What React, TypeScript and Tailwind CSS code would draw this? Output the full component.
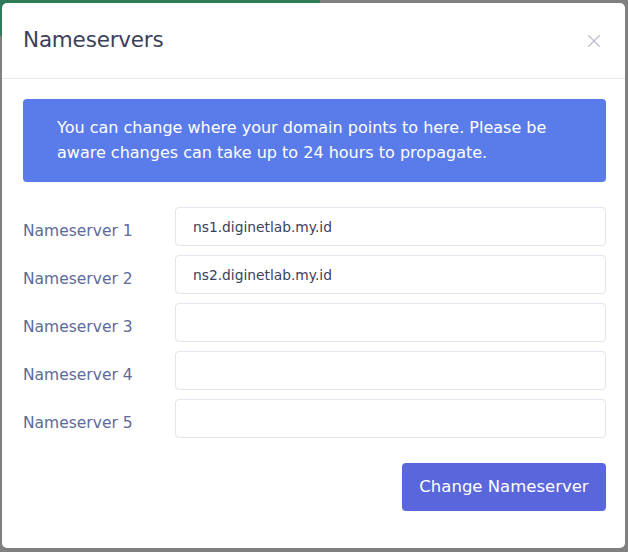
import { X } from 'lucide-react';

const servers = ['ns1.diginetlab.my.id', 'ns2.diginetlab.my.id', '', '', ''];

export default function App() {
  return (
    <div
      className="relative h-[552px] w-[628px] overflow-hidden bg-[#808080]"
      style={{ fontFamily: '"DejaVu Sans", "Open Sans", sans-serif' }}
    >
      <div className="absolute left-0 top-0 h-[36px] w-[320px] bg-[#2f7a57]" />
      <div className="absolute left-[2px] top-[3px] h-[545px] w-[623px] rounded-[5px] bg-white">
        <div className="flex h-[76px] items-center justify-between border-b border-[#e8e8ef] pl-[21px] pr-[20px]">
          <h2 className="text-[21.5px] tracking-[-0.2px] text-[#3b3f5c]">Nameservers</h2>
          <X className="h-[22px] w-[22px] text-[#b9bccb]" strokeWidth={1.2} />
        </div>

        <div className="pl-[21px] pr-[19px] pt-[20px]">
          <div className="rounded-[4px] bg-[#5a7cea] pb-[17px] pl-[34px] pr-[34px] pt-[16px] text-[16px] leading-[25px] text-white">
            You can change where your domain points to here. Please be aware changes can take up to 24 hours to propagate.
          </div>

          <div className="mt-[25px] flex flex-col gap-[9px]">
            {servers.map((value, i) => (
              <div key={i} className="flex items-start">
                <label className="w-[152px] pt-[14px] text-[15.5px] leading-[20px] text-[#5e6a9a]">
                  Nameserver {i + 1}
                </label>
                <input
                  defaultValue={value}
                  className="h-[39px] flex-1 rounded-[4px] border border-[#e3e4ec] px-[17px] text-[13.8px] text-[#3b3f5c] outline-none"
                />
              </div>
            ))}
          </div>

          <div className="mt-[25px] flex justify-end">
            <button className="h-[48px] w-[204px] rounded-[4px] bg-[#5a67dc] text-[16.5px] text-white">
              Change Nameserver
            </button>
          </div>
        </div>
      </div>
    </div>
  );
}
